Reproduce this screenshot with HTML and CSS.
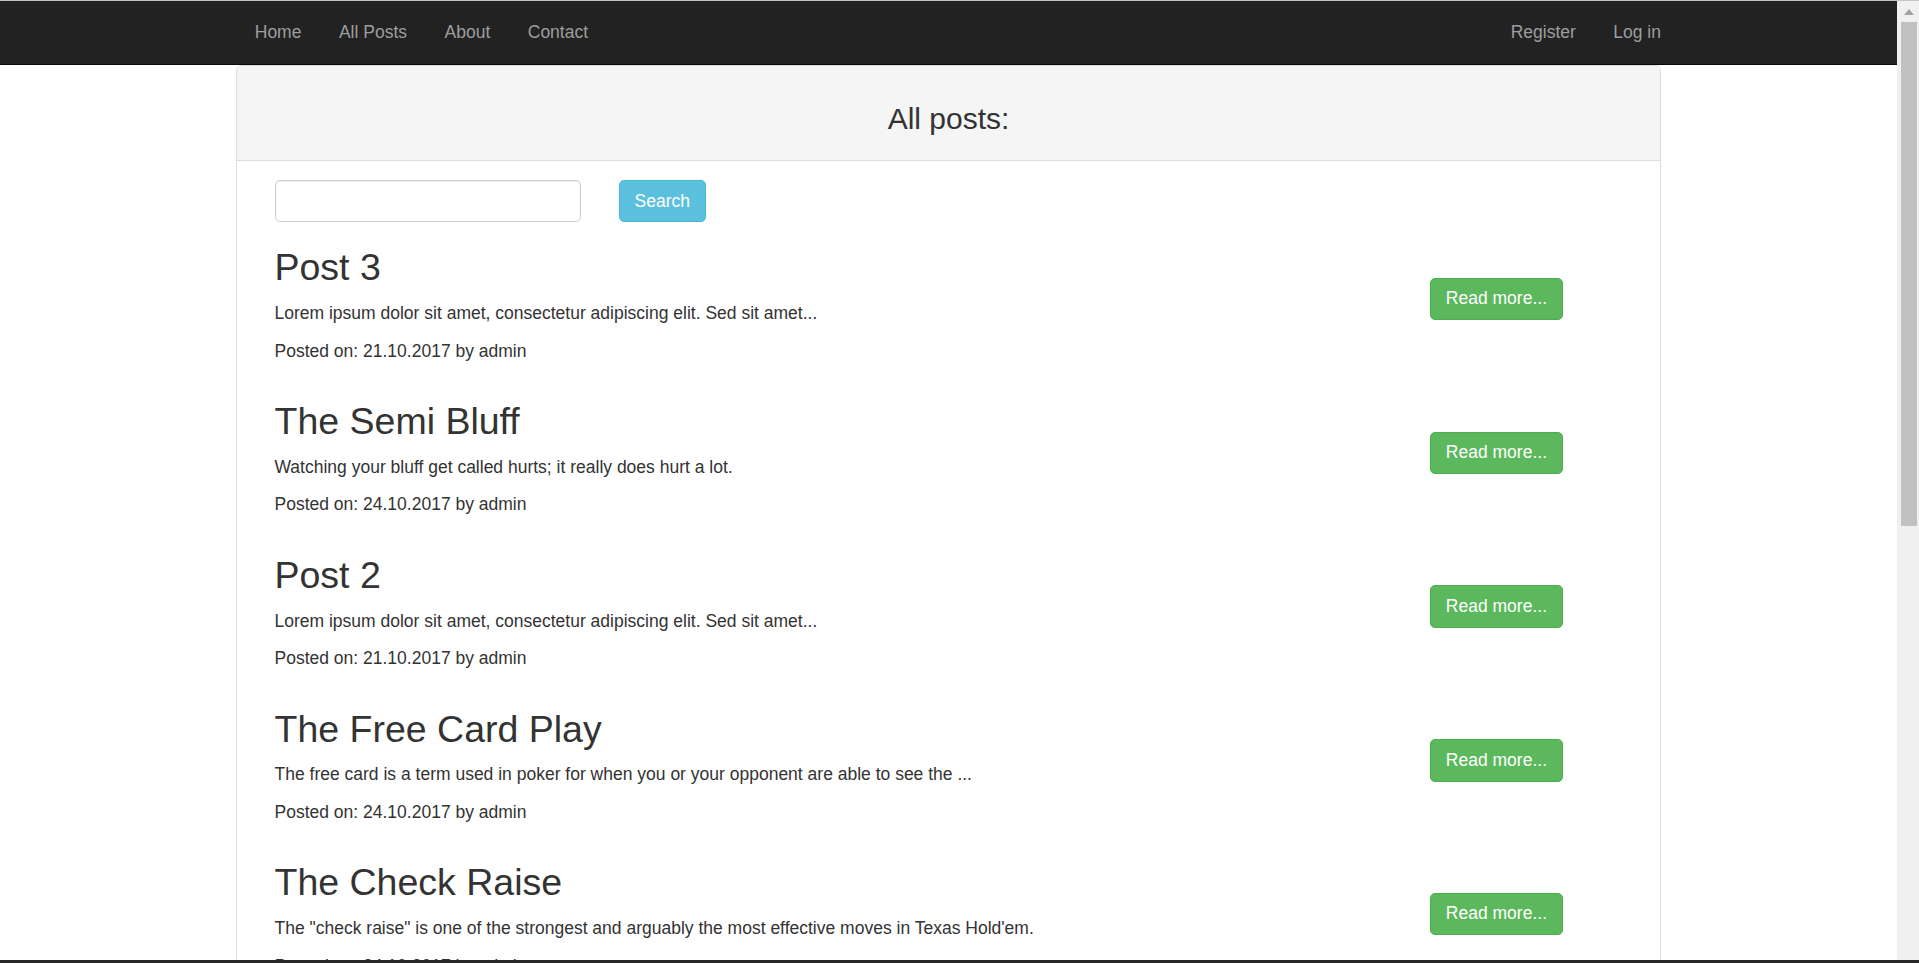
FILE: index.html
```html
<!DOCTYPE html>
<html lang="en">
<head>
<meta charset="utf-8">
<title>All posts</title>
<link rel="stylesheet" href="styles.css">
</head>
<body>
<div class="window">
  <div class="frame-top"></div>
  <div class="screen">
    <div class="viewport">
      <nav class="navbar">
        <div class="nav-inner">
          <ul class="nav nav-left">
            <li><a href="#">Home</a></li>
            <li><a href="#">All Posts</a></li>
            <li><a href="#">About</a></li>
            <li><a href="#">Contact</a></li>
          </ul>
          <ul class="nav nav-right">
            <li><a href="#">Register</a></li>
            <li><a href="#">Log in</a></li>
          </ul>
        </div>
      </nav>
      <main class="container">
        <section class="panel">
          <div class="panel-heading"><h3>All posts:</h3></div>
          <div class="panel-body">
            <div class="inner">
              <form class="search">
                <input class="search-input" type="text">
                <button class="btn btn-info" type="button">Search</button>
              </form>

              <article class="post">
                <div class="post-main">
                  <h2>Post 3</h2>
                  <p>Lorem ipsum dolor sit amet, consectetur adipiscing elit. Sed sit amet...</p>
                  <p>Posted on: 21.10.2017 by admin</p>
                </div>
                <a class="btn btn-success" href="#">Read more...</a>
              </article>

              <article class="post">
                <div class="post-main">
                  <h2>The Semi Bluff</h2>
                  <p>Watching your bluff get called hurts; it really does hurt a lot.</p>
                  <p>Posted on: 24.10.2017 by admin</p>
                </div>
                <a class="btn btn-success" href="#">Read more...</a>
              </article>

              <article class="post">
                <div class="post-main">
                  <h2>Post 2</h2>
                  <p>Lorem ipsum dolor sit amet, consectetur adipiscing elit. Sed sit amet...</p>
                  <p>Posted on: 21.10.2017 by admin</p>
                </div>
                <a class="btn btn-success" href="#">Read more...</a>
              </article>

              <article class="post">
                <div class="post-main">
                  <h2>The Free Card Play</h2>
                  <p>The free card is a term used in poker for when you or your opponent are able to see the ...</p>
                  <p>Posted on: 24.10.2017 by admin</p>
                </div>
                <a class="btn btn-success" href="#">Read more...</a>
              </article>

              <article class="post">
                <div class="post-main">
                  <h2>The Check Raise</h2>
                  <p>The "check raise" is one of the strongest and arguably the most effective moves in Texas Hold'em.</p>
                  <p>Posted on: 24.10.2017 by admin</p>
                </div>
                <a class="btn btn-success" href="#">Read more...</a>
              </article>
            </div>
          </div>
        </section>
      </main>
    </div>
    <div class="scrollbar">
      <div class="sb-arrow"><svg width="10" height="6" viewBox="0 0 10 6"><polygon points="0,6 10,6 5,0" fill="#a3a3a3"/></svg></div>
      <div class="sb-thumb"></div>
    </div>
  </div>
  <div class="frame-bottom"></div>
</div>
</body>
</html>
```

FILE: styles.css
```css
* { box-sizing: border-box; }
html, body {
  margin: 0;
  padding: 0;
  height: 963px;
  overflow: hidden;
  background: #fff;
}
body {
  font-family: "Liberation Sans", Arial, Helvetica, sans-serif;
  font-size: 17.5px;
  line-height: 25px;
  color: #333;
}
.window {
  display: grid;
  grid-template-rows: 1px 959px 3px;
  height: 963px;
}
.frame-top { background: #c4c4c4; }
.frame-bottom { background: #262626; }
.screen {
  display: flex;
  overflow: hidden;
}
.viewport {
  flex: 1;
  overflow: hidden;
  min-width: 0;
}
.scrollbar {
  width: 22px;
  background: #f0f0f0;
  display: flex;
  flex-direction: column;
  align-items: center;
  padding-left: 2px;
}
.sb-arrow {
  height: 21px;
  width: 100%;
  display: flex;
  align-items: center;
  justify-content: center;
}
.sb-thumb {
  width: 16px;
  height: 504px;
  background: #c1c1c1;
}

/* navbar */
.navbar {
  background: #222;
  border-bottom: 1px solid #080808;
  height: 63.5px;
}
.nav-inner {
  width: 1425px;
  margin: 0 auto;
  display: flex;
  justify-content: space-between;
}
.nav {
  list-style: none;
  margin: 0;
  padding: 0;
  display: flex;
}
.nav-right { margin-right: -18.75px; }
.nav a {
  display: block;
  padding: 18.75px;
  line-height: 25px;
  color: #9d9d9d;
  text-decoration: none;
}

/* panel */
.container {
  width: 1425px;
  margin: 0 auto;
}
.panel {
  border: 1px solid #ddd;
  border-radius: 5px;
  background: #fff;
}
.panel-heading {
  background: #f5f5f5;
  border-bottom: 1px solid #ddd;
  border-radius: 4px 4px 0 0;
  padding: 12.5px 18.75px;
}
.panel-heading h3 {
  margin: 24px 0 12.5px;
  font-size: 30px;
  line-height: 33px;
  font-weight: 500;
  text-align: center;
  color: #333;
}
.panel-body { padding: 18.75px; }
.inner { padding: 0 18.75px; }

.search {
  display: flex;
  gap: 37.5px;
  margin: 0;
}
.search-input {
  width: 306.5px;
  height: 42.5px;
  border: 1px solid #ccc;
  border-radius: 5px;
  box-shadow: inset 0 1px 1px rgba(0,0,0,.075);
  font: inherit;
  padding: 7.5px 15px;
}
.btn {
  display: inline-block;
  height: 42.5px;
  padding: 7.5px 15px;
  border: 1px solid transparent;
  border-radius: 5px;
  font-family: inherit;
  font-size: 17.5px;
  line-height: 25px;
  color: #fff;
  text-decoration: none;
  white-space: nowrap;
}
.btn-info { background: #5bc0de; border-color: #46b8da; }
.btn-success { background: #5cb85c; border-color: #4cae4c; margin-right: 59.5px; }

.post {
  display: flex;
  align-items: center;
}
.post-main { flex: 1; min-width: 0; }
.post h2 {
  margin: 25px 0 12.5px;
  font-size: 37.5px;
  line-height: 41.25px;
  font-weight: 500;
  color: #333;
}
.post p { margin: 0 0 12.5px; }
```
